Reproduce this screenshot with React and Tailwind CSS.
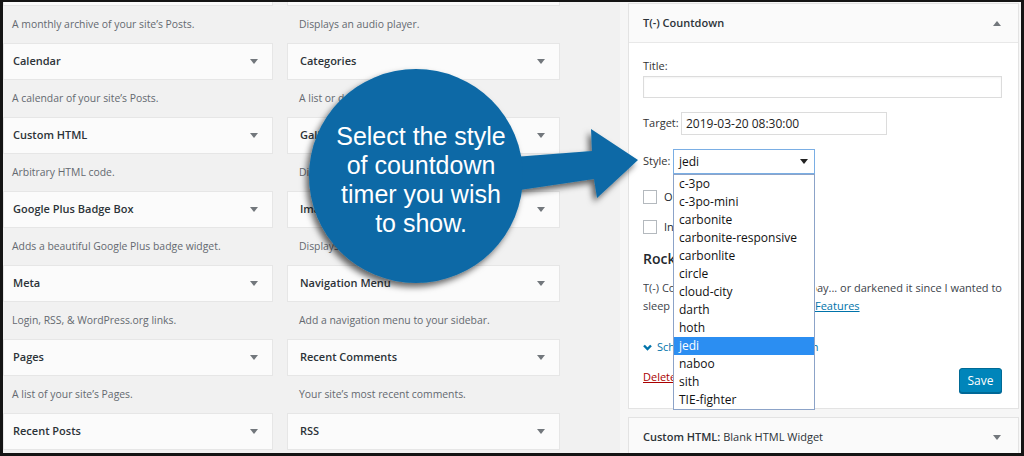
import React from "react";

const leftCol = [
  ["Archives", "A monthly archive of your site\u2019s Posts."],
  ["Calendar", "A calendar of your site\u2019s Posts."],
  ["Custom HTML", "Arbitrary HTML code."],
  ["Google Plus Badge Box", "Adds a beautiful Google Plus badge widget."],
  ["Meta", "Login, RSS, & WordPress.org links."],
  ["Pages", "A list of your site\u2019s Pages."],
  ["Recent Posts", "Your site\u2019s most recent Posts."],
];

const midCol = [
  ["Audio", "Displays an audio player."],
  ["Categories", "A list or dropdown of categories."],
  ["Gallery", "Displays an image gallery."],
  ["Image", "Displays an image."],
  ["Navigation Menu", "Add a navigation menu to your sidebar."],
  ["Recent Comments", "Your site\u2019s most recent comments."],
  ["RSS", "Entries from any RSS or Atom feed."],
];

const styles = [
  "c-3po",
  "c-3po-mini",
  "carbonite",
  "carbonite-responsive",
  "carbonlite",
  "circle",
  "cloud-city",
  "darth",
  "hoth",
  "jedi",
  "naboo",
  "sith",
  "TIE-fighter",
];

function Tri({ up = false, color = "#72777c" }) {
  return (
    <svg width="8" height="5" viewBox="0 0 8 5" className="shrink-0">
      <polygon points={up ? "0,5 8,5 4,0" : "0,0 8,0 4,5"} fill={color} />
    </svg>
  );
}

function Column({ items, width, pl }) {
  return (
    <div className={`flex flex-col mt-[-33px] shrink-0 ${width}`}>
      {items.map(([t, d]) => (
        <React.Fragment key={t}>
          <div
            className={`h-[37px] shrink-0 bg-[#fbfbfb] border border-[#e6e6e6] flex items-center justify-between pr-[14px] ${pl}`}
          >
            <span className="text-[11px] font-semibold text-[#2c3338]">{t}</span>
            <Tri />
          </div>
          <div className={`h-[37px] shrink-0 flex items-center text-[10.4px] text-[#646970] ${pl}`}>
            {d}
          </div>
        </React.Fragment>
      ))}
    </div>
  );
}

export default function App() {
  return (
    <div className="relative box-border w-[1024px] h-[456px] overflow-hidden border-[#141414] border-t-2 border-l-[3px] border-r-[3px] border-b-[3px] bg-[#f1f1f1] font-['Open_Sans',sans-serif] text-[#23282d]">
      <div className="flex h-full">
        <div className="flex gap-[14px] items-start">
          <Column items={leftCol} width="w-[270px]" pl="pl-[9px]" />
          <Column items={midCol} width="w-[273px]" pl="pl-[12px]" />
        </div>

        <div className="ml-[60px] w-[401px] h-full shrink-0 bg-[#f6f6f6] pl-[8px] pr-[2px]">
          <div className="mt-[1px] border border-[#e3e3e3] bg-white">
            <div className="h-[39px] bg-[#fafafa] border-b border-[#e8e8e8] flex items-center justify-between pl-[14px] pr-[17px]">
              <span className="text-[11px] font-semibold text-[#2c3338]">T(-) Countdown</span>
              <Tri up />
            </div>
            <div className="pt-[14px] pb-[15px] pl-[14px] pr-[16px] text-[11px]">
              <div className="leading-[18px] text-[#333]">Title:</div>
              <div className="mt-[1px] h-[22px] w-full border border-[#dcdcdc] bg-white shadow-[inset_0_1px_2px_rgba(0,0,0,0.05)]" />

              <div className="mt-[14px] flex items-center">
                <span className="w-[38px] text-[#333]">Target:</span>
                <div className="h-[23px] w-[206px] border border-[#dcdcdc] flex items-center pl-[4px] text-[12px] text-[#222]">
                  2019-03-20 08:30:00
                </div>
              </div>

              <div className="mt-[14px] flex items-center">
                <span className="w-[30px] text-[#333]">Style:</span>
                <div className="relative w-[142px] h-[25px] border border-[#7aaee4] bg-white flex items-center justify-between pl-[5px] pr-[6px] text-[12px] text-[#111]">
                  <span>jedi</span>
                  <Tri color="#222" />
                  <div className="absolute left-[-1px] top-[24px] w-[142px] border border-[#8ca3c8] bg-white z-10">
                    {styles.map((s) => (
                      <div
                        key={s}
                        className={`h-[18px] leading-[18px] pl-[5px] text-[12px] ${
                          s === "jedi" ? "bg-[#2b8ef2] text-white" : "text-[#111]"
                        }`}
                      >
                        {s}
                      </div>
                    ))}
                  </div>
                </div>
              </div>

              <div className="mt-[14px] h-[18px] flex items-center">
                <div className="w-[14px] h-[14px] border border-[#b4b9be] bg-white" />
                <span className="ml-[7px]">Omit Title</span>
              </div>
              <div className="mt-[12px] h-[18px] flex items-center">
                <div className="w-[14px] h-[14px] border border-[#b4b9be] bg-white" />
                <span className="ml-[7px]">Include jQuery File</span>
              </div>

              <div className="mt-[13px] leading-[20px] text-[14px] font-semibold">Rockstar Features</div>

              <div className="mt-[10px] leading-[18px] text-[#3c434a]">
                <div className="flex whitespace-nowrap">
                  <span className="inline-block w-[174px] overflow-hidden">T(-) Countdown Control made my d</span>
                  <span className="ml-auto">ay... or darkened it since I wanted to</span>
                </div>
                <div className="flex whitespace-nowrap">
                  <span className="inline-block w-[172px] overflow-hidden">sleep in. Check out the Rockstar</span>
                  <span className="text-[#0073aa] underline">Features</span>
                </div>
              </div>

              <div className="mt-[23px] h-[18px] flex items-center text-[#0073aa]">
                <svg width="9" height="7" viewBox="0 0 9 7" className="shrink-0">
                  <polyline points="1,1.5 4.5,5 8,1.5" fill="none" stroke="#0073aa" strokeWidth="2.4" />
                </svg>
                <span className="ml-[5px]">Schedule Recurring Countdown</span>
              </div>

              <div className="mt-[12px] flex items-start justify-between">
                <span className="leading-[18px] text-[#a00] underline">Delete</span>
                <div className="h-[25px] w-[43px] rounded-[3px] bg-[#0085ba] border border-[#006a95] shadow-[0_1px_0_#006799] flex items-center justify-center text-white text-[12px]">
                  Save
                </div>
              </div>
            </div>
          </div>

          <div className="mt-[8px] h-[40px] border border-[#e3e3e3] bg-[#fafafa] flex items-center justify-between pl-[14px] pr-[17px]">
            <span className="text-[11px] text-[#2c3338]">
              <span className="font-semibold">Custom HTML:</span> Blank HTML Widget
            </span>
            <Tri />
          </div>
        </div>
      </div>

      <div className="absolute left-[-3px] top-[-2px] w-[1024px] h-[456px] pointer-events-none z-20">
        <svg width="1024" height="456" className="absolute left-0 top-0">
          <defs>
            <filter id="sh" x="-30%" y="-30%" width="160%" height="160%">
              <feDropShadow dx="-3" dy="4" stdDeviation="3" floodColor="#000" floodOpacity="0.6" />
            </filter>
          </defs>
          <g filter="url(#sh)" fill="#0a69a6">
            <polygon points="500,158 592,151 591,129 638,160 597,198 594,179 500,193" />
            <circle cx="416" cy="176" r="107" />
          </g>
        </svg>
        <div className="absolute left-[321px] top-[122px] w-[200px] text-center text-white text-[25px] leading-[29px] font-['Liberation_Sans',Arial,sans-serif]">
          Select the style
          <br />
          of countdown
          <br />
          timer you wish
          <br />
          to show.
        </div>
      </div>
    </div>
  );
}
